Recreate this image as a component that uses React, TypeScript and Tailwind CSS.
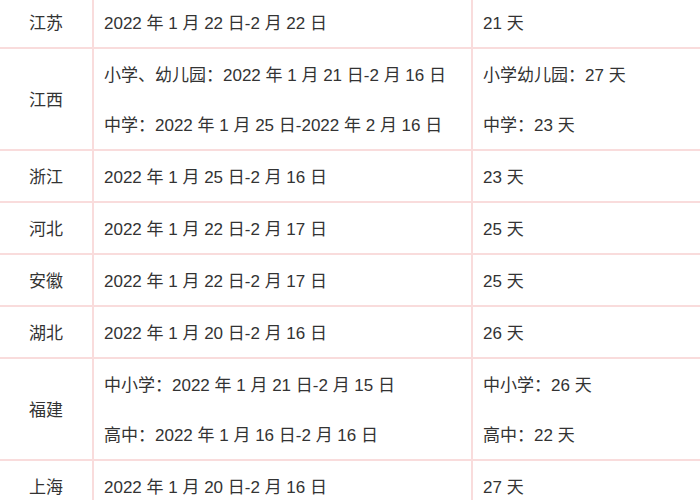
const rows: { name: string; dates: string[]; days: string[] }[] = [
  { name: "江苏", dates: ["2022 年 1 月 22 日-2 月 22 日"], days: ["21 天"] },
  {
    name: "江西",
    dates: ["小学、幼儿园：2022 年 1 月 21 日-2 月 16 日", "中学：2022 年 1 月 25 日-2022 年 2 月 16 日"],
    days: ["小学幼儿园：27 天", "中学：23 天"],
  },
  { name: "浙江", dates: ["2022 年 1 月 25 日-2 月 16 日"], days: ["23 天"] },
  { name: "河北", dates: ["2022 年 1 月 22 日-2 月 17 日"], days: ["25 天"] },
  { name: "安徽", dates: ["2022 年 1 月 22 日-2 月 17 日"], days: ["25 天"] },
  { name: "湖北", dates: ["2022 年 1 月 20 日-2 月 16 日"], days: ["26 天"] },
  {
    name: "福建",
    dates: ["中小学：2022 年 1 月 21 日-2 月 15 日", "高中：2022 年 1 月 16 日-2 月 16 日"],
    days: ["中小学：26 天", "高中：22 天"],
  },
  { name: "上海", dates: ["2022 年 1 月 20 日-2 月 16 日"], days: ["27 天"] },
];

export default function App() {
  return (
    <div
      className="w-[700px] h-[500px] overflow-hidden bg-white text-[#333] text-[17px]"
      style={{ fontFamily: '"Liberation Sans", "Noto Sans CJK SC", sans-serif' }}
    >
      <table className="w-[700px] border-collapse -mt-[3px] table-fixed">
        <colgroup>
          <col className="w-[93px]" />
          <col className="w-[379px]" />
          <col />
        </colgroup>
        <tbody>
          {rows.map((row) => (
            <tr key={row.name} className="border-b-2 border-[#f9dcdc]">
              <td className="border-r-2 border-[#f9dcdc] text-center align-middle p-0 pt-[4px]">{row.name}</td>
              <td className="border-r-2 border-[#f9dcdc] pl-[10px] p-0">
                {row.dates.map((d) => (
                  <div key={d} className="h-[50px] leading-[54px] whitespace-nowrap">
                    {d}
                  </div>
                ))}
              </td>
              <td className="pl-[10px] p-0">
                {row.days.map((d) => (
                  <div key={d} className="h-[50px] leading-[54px] whitespace-nowrap">
                    {d}
                  </div>
                ))}
              </td>
            </tr>
          ))}
        </tbody>
      </table>
    </div>
  );
}
